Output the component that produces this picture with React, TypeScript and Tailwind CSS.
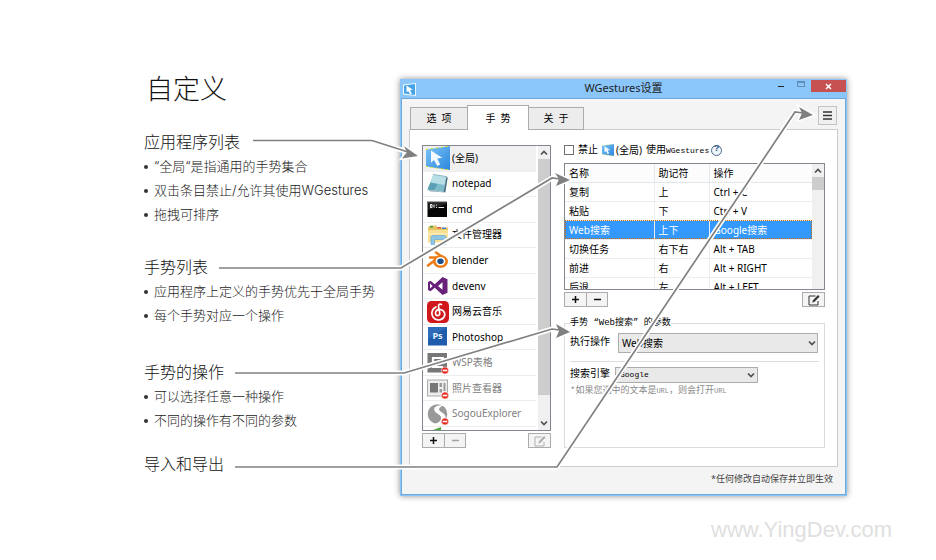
import React, { useState } from "react";

const UI = "font-['Noto_Sans','Noto_Sans_CJK_SC',sans-serif]";
const SONG = "font-['Liberation_Mono','Noto_Sans_CJK_SC',monospace]";

function CursorIcon({ className }: { className: string }) {
  return (
    <svg viewBox="0 0 24 24" className={className} aria-hidden="true">
      <defs>
        <linearGradient id="pane" x1="0" y1="0" x2="1" y2="1">
          <stop offset="0" stopColor="#7cc4f8" />
          <stop offset="1" stopColor="#2b86dc" />
        </linearGradient>
      </defs>
      <path d="M0 3.5 24 0v24L0 20.5z" fill="url(#pane)" />
      <path d="M5 4.5v12.3l3-2.8 3.2 6 3-1.4-3-6 5-.8z" fill="#f4faff" />
      <path d="M0 3.5 24 0M0 20.5 24 24" stroke="#d9e021" strokeWidth="1" strokeDasharray="2 3" />
    </svg>
  );
}

function WindowIcon() {
  return (
    <svg viewBox="0 0 13 13" className="h-[13px] w-[13px] shrink-0" aria-hidden="true">
      <path d="M0 1.5 13 0v13L0 11.5z" fill="#f2f9ff" />
      <path d="M1 2.4 12 1.1v10.8L1 10.6z" fill="#45a3e8" />
      <path d="M3.5 2.5v6.8L5.2 8l1.9 3.2 1.6-.8L7 7.2l2.8-.5z" fill="#fff" />
    </svg>
  );
}

function Blocked() {
  return (
    <g>
      <circle cx="19" cy="19.500" r="3.600" fill="#e8281c" stroke="#fff" strokeWidth=".6" />
      <path d="M16.800 19.500h4.400" stroke="#fff" strokeWidth="1.600" />
    </g>
  );
}

const ICON = "h-6 w-6 shrink-0";

const icons: Record<string, React.ReactNode> = {
  global: <CursorIcon className={ICON} />,
  notepad: (
    <svg viewBox="0 0 24 24" className={ICON} aria-hidden="true">
      <path d="M7.500 2.500 20.500 4.500 17.500 20 1.500 17.500z" fill="#7fbccb" />
      <path d="M7.500 2.500 20.500 4.500 18.700 13 4.500 10.500z" fill="#b9dfe6" />
      <path d="M1.500 17.500l3-7 7 1.500L8 18.600z" fill="#5a9fb4" />
      <path d="M17.500 20 20.500 4.500l1.200 1.200-2.400 14.800z" fill="#456f80" />
      <path d="M1.500 17.500l16 2.500 1.800.5-15-1z" fill="#9cb3bb" />
      <path d="M7.500 2.500 20.500 4.500" stroke="#6f8d96" strokeWidth="1" strokeDasharray="1 1" />
    </svg>
  ),
  cmd: (
    <svg viewBox="0 0 24 24" className={ICON} aria-hidden="true">
      <path d="M1.500 4h19.500v16H1.500z" fill="#050505" />
      <path d="M1.500 4h19.500v1.300H1.500z" fill="#a9a9a9" />
      <path d="M2.500 13 20.500 7v-1.500h-18z" fill="#444" opacity=".5" />
      <path d="M4.500 7.500v3h1.500v-3zM8 7.500v3M10.500 7.500v1M10.500 10v1M12.500 10.500h5.500" fill="none" stroke="#eee" strokeWidth="1" />
    </svg>
  ),
  files: (
    <svg viewBox="0 0 24 24" className={ICON} aria-hidden="true">
      <path d="M2 4.500 4 2.500h6l1.500 2H22V19H2z" fill="#e6c264" />
      <path d="M4 3h3v1.500H4z" fill="#39a24b" />
      <path d="M11 4h4v1.500h-4z" fill="#d85a4b" />
      <path d="M16 4.500h4V6h-4z" fill="#3d89cf" />
      <path d="M2 7h20v12.500H2z" fill="#f7df93" />
      <path d="M2 10h20v1.500H2z" fill="#fbecb8" />
      <path d="M5 21.500v-7q0-2 2-2h11q2 0 2 2v7h-3.500v-5h-8v5z" fill="#8fc6e8" stroke="#5aa6d6" strokeWidth=".6" />
    </svg>
  ),
  blender: (
    <svg viewBox="0 0 24 24" className={ICON} aria-hidden="true">
      <path d="M10 4.500 20 11.500M4 9.500h9M2 17.500 11 10.500" stroke="#ec7d18" strokeWidth="2.600" strokeLinecap="round" />
      <ellipse cx="14.500" cy="13.500" rx="7.500" ry="6.500" fill="#ec7d18" />
      <ellipse cx="14.500" cy="13.300" rx="4.800" ry="4.200" fill="#fff" />
      <ellipse cx="14.500" cy="13.300" rx="3.200" ry="2.800" fill="#1f5089" />
    </svg>
  ),
  devenv: (
    <svg viewBox="0 0 24 24" className={ICON} aria-hidden="true">
      <path fillRule="evenodd" d="M16.500 3 21.500 5.200V18.800L16.500 21 8.800 13.800 4.500 17.200 2 16V8l2.500-1.200 4.300 3.400zM16.500 8.200 12 12l4.500 3.800zM4 9.500v5L6.600 12z" fill="#68217a" />
    </svg>
  ),
  music: (
    <svg viewBox="0 0 24 24" className={ICON} aria-hidden="true">
      <rect x="1" y="1" width="22" height="22" rx="4.500" fill="#d0171c" />
      <path d="M15.500 4.500c-2-.8-3.300.2-3 2l1.200 6.300c.3 2-1 3-2.300 2.800-1.700-.3-2.300-2-1.700-3.600.9-2.200 3.400-2.900 5.600-2.200 3.200 1 4.200 4.200 2.900 6.900-1.300 2.500-4 3.600-6.700 3.200-3.700-.6-6-3.800-5.600-7.400.3-2.600 1.900-4.500 4-5.500" fill="none" stroke="#fff" strokeWidth="1.700" strokeLinecap="round" />
    </svg>
  ),
  photoshop: (
    <svg viewBox="0 0 24 24" className={ICON} aria-hidden="true">
      <rect x="2" y="2" width="19" height="18.500" fill="#1f5cab" />
      <path d="M2 2h19L2 14z" fill="#3d7bc8" opacity=".5" />
      <text x="11.500" y="14" textAnchor="middle" fontSize="9" fontWeight="700" fill="#e6f2ff" fontFamily="Noto Sans">Ps</text>
    </svg>
  ),
  wsp: (
    <svg viewBox="0 0 24 24" className={ICON} aria-hidden="true">
      <rect x="1.500" y="2" width="19.500" height="19.500" fill="#777" />
      <path d="M18 7H7v9h10M7 11.500h10" fill="none" stroke="#fff" strokeWidth="2.200" />
      <Blocked />
    </svg>
  ),
  photos: (
    <svg viewBox="0 0 24 24" className={ICON} aria-hidden="true">
      <rect x="1.500" y="4" width="20" height="16" fill="#eee" stroke="#aaa" />
      <path d="M4 7h8v9.500H4z" fill="#777" />
      <path d="M13.500 7h2.500v4h-2.500zM17.500 7h2v8h-2zM13.500 13h2.500v3.500h-2.500z" fill="#999" />
      <Blocked />
    </svg>
  ),
  sogou: (
    <svg viewBox="0 0 24 24" className={ICON} aria-hidden="true">
      <circle cx="11.500" cy="12" r="9.800" fill="#999" />
      <path d="M17.500 3.500C10 2.500 6.500 6 9 9.500c2 2.500 7 3.500 6 7.500-.5 2-2.500 3.500-5.500 4.500 4 1.500 9-.5 10-5 .8-4-3-5.500-5.500-7.500-2-1.700-.5-4.300 3.500-5.500z" fill="#fff" />
      <Blocked />
    </svg>
  ),
};

const apps = [
  { id: "global", name: "(全局)", on: true },
  { id: "notepad", name: "notepad", on: true },
  { id: "cmd", name: "cmd", on: true },
  { id: "files", name: "文件管理器", on: true },
  { id: "blender", name: "blender", on: true },
  { id: "devenv", name: "devenv", on: true },
  { id: "music", name: "网易云音乐", on: true },
  { id: "photoshop", name: "Photoshop", on: true },
  { id: "wsp", name: "WSP表格", on: false },
  { id: "photos", name: "照片查看器", on: false },
  { id: "sogou", name: "SogouExplorer", on: false },
];

const gestures = [
  ["复制", "上", "Ctrl + C"],
  ["粘贴", "下", "Ctrl + V"],
  ["Web搜索", "上下", "Google搜索"],
  ["切换任务", "右下右", "Alt + TAB"],
  ["前进", "右", "Alt + RIGHT"],
  ["后退", "左", "Alt + LEFT"],
];

function Chevron({ up = false }: { up?: boolean }) {
  return (
    <svg viewBox="0 0 8 6" className="h-[6px] w-2" aria-hidden="true">
      <path d={up ? "M1 4.500 4 1.500l3 3" : "M1 1.500l3 3 3-3"} fill="none" stroke="#505050" strokeWidth="1.700" />
    </svg>
  );
}

function EditIcon({ color }: { color: string }) {
  return (
    <svg viewBox="0 0 12 12" className="h-3 w-3" aria-hidden="true">
      <path d="M7.500 2H1v9h9V7" fill="none" stroke={color} strokeWidth="1" />
      <path d="M4.300 8.800 5 6.200 10 1l1.600 1.500-5 5.300z" fill={color} />
    </svg>
  );
}

function EditBar({ minusOff = false }: { minusOff?: boolean }) {
  const box = "flex h-[15px] items-center justify-center border border-[#acacac] bg-[#f4f4f4]";
  const off = minusOff ? "#a0a0a0" : "#111";
  return (
    <div className="mt-[2px] flex">
      <button aria-label="添加" className={`${box} w-[23px]`}>
        <svg viewBox="0 0 9 9" className="h-[9px] w-[9px]"><path d="M4.500 1v7M1 4.500h7" stroke="#111" strokeWidth="1.500" /></svg>
      </button>
      <button aria-label="删除" disabled={minusOff} className={`${box} -ml-px w-[22px]`}>
        <svg viewBox="0 0 9 9" className="h-[9px] w-[9px]"><path d="M1 4.500h7" stroke={off} strokeWidth="1.500" /></svg>
      </button>
      <button aria-label="编辑" disabled={minusOff} className={`${box} ml-auto w-[23px]`}>
        <EditIcon color={minusOff ? "#b0b0b0" : "#333"} />
      </button>
    </div>
  );
}

function Notes({ title, items, className }: { title: string; items: string[]; className: string }) {
  return (
    <section className={className}>
      <h2 className="text-base leading-[26px] text-[#111]">{title}</h2>
      <ul>
        {items.map((t) => (
          <li key={t} className="flex h-6 items-center gap-[6px] text-[13px] text-[#222]">
            <span className="h-1 w-1 rounded-full bg-[#333]" />
            <span className="whitespace-nowrap">{t}</span>
          </li>
        ))}
      </ul>
    </section>
  );
}

function Pointers() {
  const routes = [
    { line: "M253 140.500H372L408 152", tip: "M418 156 402 158.500 407 152 404 146z" },
    { line: "M219 268H401L552 178 560 179", tip: "M570 180 556 186 559 179 555 173z" },
    { line: "M235 373H404L552 329 560 330", tip: "M570 332 556 338 559 331 556 324z" },
    { line: "M235 467H557L795 112 803 113", tip: "M813 115 799 120 802 113 799 107z" },
  ];
  return (
    <svg viewBox="0 0 936 560" className="pointer-events-none absolute top-0 left-0 h-[560px] w-[936px]" aria-hidden="true">
      {routes.map((r) => (
        <g key={r.line}>
          <path d={r.line} fill="none" stroke="#fff" strokeWidth="5" />
          <path d={r.tip} fill="#fff" stroke="#fff" strokeWidth="3" />
          <path d={r.line} fill="none" stroke="#808080" strokeWidth="1.700" />
          <path d={r.tip} fill="#808080" />
        </g>
      ))}
    </svg>
  );
}

function AppList() {
  const [current, setCurrent] = useState("global");
  return (
    <div className="w-[129px] shrink-0">
      <div className="flex h-[286px] border border-[#828790] bg-white">
        <div className="flex min-w-0 flex-1 flex-col overflow-hidden pr-[2px]">
          <ul className="flex h-[281px] flex-col">
            {apps.map((a) => (
              <li key={a.id} className="flex min-h-0 flex-1 border-b border-[#ededed]">
                <button
                  onClick={() => setCurrent(a.id)}
                  className={`flex w-full items-center gap-[2px] pl-[3px] text-left text-[10px] whitespace-nowrap ${a.on ? "text-black" : "text-[#808080]"} ${current === a.id ? "bg-[#f0f0f0]" : ""}`}
                >
                  {icons[a.id]}
                  {a.name}
                </button>
              </li>
            ))}
          </ul>
          <svg viewBox="0 0 8 3" className="ml-[10px] h-[3px] w-2" aria-hidden="true"><path d="M0 3 8 0v3z" fill="#4fa83d" /></svg>
        </div>
        <div className="flex w-3 flex-col items-center bg-[#f0f0f0]">
          <span className="flex h-[13px] items-center"><Chevron up /></span>
          <span className="h-[236px] w-full bg-[#cdcdcd]" />
          <span className="flex flex-1 items-center pt-5"><Chevron /></span>
        </div>
      </div>
      <EditBar minusOff />
    </div>
  );
}

function GestureTable() {
  return (
    <div className="mt-2 flex h-[127px] overflow-hidden border border-[#828790] bg-white">
      <table className={`h-min flex-1 table-fixed border-collapse text-[10px] leading-[18px] whitespace-nowrap ${UI}`}>
        <thead>
          <tr className="h-[18px] leading-4">
            {["名称", "助记符", "操作"].map((h, i) => (
              <th key={h} className={`border-b border-[#e2e7ee] bg-[#fcfcfc] p-0 pl-1 text-left font-normal ${i === 0 ? "w-[89px]" : i === 1 ? "w-[55px] border-l" : "border-l"}`}>{h}</th>
            ))}
          </tr>
        </thead>
        <tbody>
          {gestures.map((g, r) => (
            <tr key={g[0]} className={`h-[19px] ${r === 2 ? "bg-[#3399ff] text-white outline-1 -outline-offset-1 outline-dotted outline-[#cc6600]" : ""}`}>
              {g.map((c, i) => (
                <td key={c} className={`border-b border-[#ededed] p-0 pl-1 ${i > 0 ? "border-l" : ""}`}>{c}</td>
              ))}
            </tr>
          ))}
        </tbody>
      </table>
      <div className="flex w-3 shrink-0 flex-col items-center bg-[#f0f0f0]">
        <span className="flex h-[13px] items-center"><Chevron up /></span>
        <span className="h-[13px] w-full bg-[#cdcdcd]" />
      </div>
    </div>
  );
}

function Settings() {
  const [banned, setBanned] = useState(false);
  return (
    <div className={`min-w-0 flex-1 text-[9px] ${SONG}`}>
      <div className="flex h-[10px] items-center">
        <label className="flex items-center whitespace-nowrap">
          <input type="checkbox" checked={banned} onChange={(e) => setBanned(e.target.checked)} className="mr-1 h-[10px] w-[10px] appearance-none border border-[#707070] bg-white checked:bg-[#3399ff]" />
          <span className="mr-1 text-[10px]">禁止</span>
          <CursorIcon className="h-3 w-3" />
          <span className={`mr-1 ml-[2px] text-[10px] ${UI}`}>(全局)</span>
          <span className="text-[10px]">使用<span className="text-[8px]">WGestures</span></span>
        </label>
        <button aria-label="帮助" className="ml-[2px] flex h-[11px] w-[11px] items-center justify-center rounded-full border border-[#4d6a8c] bg-[#eef5fb] text-[9px] font-bold text-[#35577e]">?</button>
      </div>
      <GestureTable />
      <EditBar />
      <fieldset className="mt-2 h-[133px] border border-[#dcdcdc] px-[5px] pb-1">
        <legend className="px-0 leading-4">手势 “Web搜索” 的参数</legend>
        <div className="flex h-[23px] items-center gap-2">
          <label htmlFor="action" className="shrink-0 text-[10px] leading-4 whitespace-nowrap">执行操作</label>
          <div className="relative flex-1">
            <select id="action" className={`block h-5 w-[200px] appearance-none border border-[#acacac] bg-[#e9e9e9] pl-[3px] text-[10px] leading-4 ${UI}`}>
              <option>Web搜索</option>
            </select>
            <span className="pointer-events-none absolute top-[7px] left-[190px] flex"><Chevron /></span>
          </div>
        </div>
        <hr className="mt-[7px] border-[#dcdcdc]" />
        <div className="mt-[5px] flex h-4 items-center gap-[5px]">
          <label htmlFor="engine" className="shrink-0 text-[10px] leading-4 whitespace-nowrap">搜索引擎</label>
          <div className="relative flex-1">
            <select id="engine" className="block h-4 w-[143px] appearance-none border border-[#acacac] bg-[#e9e9e9] pl-1 text-[8px] leading-3">
              <option>Google</option>
            </select>
            <span className="pointer-events-none absolute top-[5px] left-[132px] flex"><Chevron /></span>
          </div>
        </div>
        <p className="leading-4 whitespace-nowrap text-[#8a8a8a]">*如果您选中的文本是<span className="text-[7px]">URL</span>，则会打开<span className="text-[7px]">URL</span></p>
      </fieldset>
    </div>
  );
}

function TabLabel({ text }: { text: string }) {
  return <span className="whitespace-pre">{text}</span>;
}

export default function App() {
  return (
    <div className="relative min-h-[560px] overflow-hidden bg-white">
      <main className="flex pt-[71px] pr-[89px] pl-36">
        <div className="w-64 shrink-0 font-['Inter','Noto_Sans_CJK_SC',sans-serif] font-light">
          <h1 className="pl-[2px] text-[27px] leading-[38px] text-[#111]">自定义</h1>
          <Notes className="mt-5" title="应用程序列表" items={["“全局“是指通用的手势集合", "双击条目禁止/允许其使用WGestures", "拖拽可排序"]} />
          <Notes className="mt-[27px]" title="手势列表" items={["应用程序上定义的手势优先于全局手势", "每个手势对应一个操作"]} />
          <Notes className="mt-[31px]" title="手势的操作" items={["可以选择任意一种操作", "不同的操作有不同的参数"]} />
          <Notes className="mt-[18px]" title="导入和导出" items={[]} />
        </div>

        <div className={`mt-2 min-w-0 max-w-[720px] flex-1 self-start border border-[#8ac6fa] bg-[#8ac6fa] shadow-[0_0_6px_rgba(0,0,0,0.45)] ${UI}`}>
          <header className="grid h-[18px] grid-cols-[80px_1fr_80px]">
            <span className="flex items-center pl-[2px]"><WindowIcon /></span>
            <h3 className="text-center text-[11px] leading-[15px] text-[#222]">WGestures设置</h3>
            <span className="flex items-start justify-end">
              <button aria-label="最小化" className="flex h-3 w-5 items-center justify-center"><span className="h-px w-[6px] bg-[#222]" /></button>
              <button aria-label="最大化" className="flex h-2 w-5 items-center justify-center"><span className="h-[6px] w-2 border border-t-2 border-[#5f8db5]" /></button>
              <button aria-label="关闭" className="flex h-3 w-[35px] shrink-0 items-center justify-center bg-[#c75050]">
                <svg viewBox="0 0 7 7" className="h-[7px] w-[7px]"><path d="M1 1l5 5M6 1 1 6" stroke="#fff" strokeWidth="1.500" /></svg>
              </button>
            </span>
          </header>
          <div className="border border-[#6fa9da] bg-[#f4f4f4] px-[7px] pt-[5px]">
            <div className="flex h-[25px] items-end">
              <nav className="relative z-10 -mb-px flex items-end pl-px text-[10px] text-black">
                <button className="h-[23px] w-[57px] border border-r-0 border-[#acacac] bg-[#ececec]"><TabLabel text="选  项" /></button>
                <button className="h-[25px] w-[62px] border border-b-0 border-[#acacac] bg-white"><TabLabel text="手  势" /></button>
                <button className="h-[23px] w-[55px] border border-l-0 border-[#acacac] bg-[#ececec]"><TabLabel text="关  于" /></button>
              </nav>
              <button aria-label="菜单" className="mr-px mb-1 ml-auto flex h-[19px] w-[19px] shrink-0 items-center justify-center border border-[#c4c4c4] bg-[#f0f0f0]">
                <svg viewBox="0 0 9 9" className="h-[9px] w-[9px]"><path d="M0 1h9M0 4.500h9M0 8h9" stroke="#333" strokeWidth="1.500" /></svg>
              </button>
            </div>
            <section className="flex h-[338px] gap-[13px] border border-[#cccccc] bg-white pt-[15px] pr-3 pl-3">
              <AppList />
              <Settings />
            </section>
            <p className="pr-[5px] pb-[3px] text-right text-[9px] leading-6 text-[#444]">*任何修改自动保存并立即生效</p>
          </div>
        </div>
      </main>
      <footer className="pt-[18px] pr-11 text-right font-['Liberation_Sans',sans-serif] text-[22px] leading-8 text-[#e0e0e0]">www.YingDev.com</footer>
      <Pointers />
    </div>
  );
}
